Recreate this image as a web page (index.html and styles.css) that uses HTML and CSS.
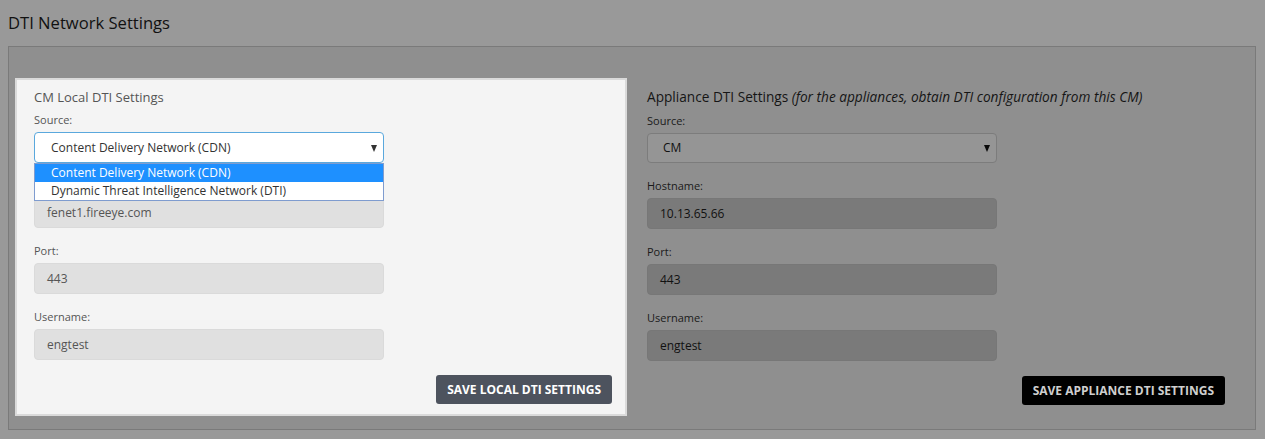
FILE: index.html
```html
<!DOCTYPE html>
<html>
<head>
<meta charset="utf-8">
<title>DTI Network Settings</title>
<link rel="stylesheet" href="styles.css">
</head>
<body>
<h1 class="page-title">DTI Network Settings</h1>
<div class="panel">
  <div class="card card-local">
    <h2 class="section-title">CM Local DTI Settings</h2>
    <div class="field">
      <label class="field-label">Source:</label>
      <div class="select select-focus">
        <span class="select-value">Content Delivery Network (CDN)</span>
        <span class="caret"></span>
        <ul class="dropdown">
          <li class="option option-active">Content Delivery Network (CDN)</li>
          <li class="option">Dynamic Threat Intelligence Network (DTI)</li>
        </ul>
      </div>
    </div>
    <div class="field field-covered">
      <label class="field-label label-covered">Hostname:</label>
      <div class="input">fenet1.fireeye.com</div>
    </div>
    <div class="field">
      <label class="field-label">Port:</label>
      <div class="input">443</div>
    </div>
    <div class="field">
      <label class="field-label">Username:</label>
      <div class="input">engtest</div>
    </div>
    <div class="actions">
      <button class="btn btn-local">SAVE LOCAL DTI SETTINGS</button>
    </div>
  </div>
  <div class="card card-appliance">
    <h2 class="section-title">Appliance DTI Settings <em>(for the appliances, obtain DTI configuration from this CM)</em></h2>
    <div class="field">
      <label class="field-label">Source:</label>
      <div class="select select-dim">
        <span class="select-value">CM</span>
        <span class="caret"></span>
      </div>
    </div>
    <div class="field">
      <label class="field-label">Hostname:</label>
      <div class="input">10.13.65.66</div>
    </div>
    <div class="field">
      <label class="field-label">Port:</label>
      <div class="input">443</div>
    </div>
    <div class="field">
      <label class="field-label">Username:</label>
      <div class="input">engtest</div>
    </div>
    <div class="actions">
      <button class="btn btn-appliance">SAVE APPLIANCE DTI SETTINGS</button>
    </div>
  </div>
</div>
</body>
</html>
```
FILE: styles.css
```css
* { box-sizing: border-box; }
html, body { margin: 0; padding: 0; }
body {
  background: #999999;
  font-family: "Open Sans", "Liberation Sans", sans-serif;
  color: #111;
  height: 439px;
  overflow: hidden;
}
.page-title {
  margin: 0;
  padding: 10px 8px 0 8px;
  height: 46px;
  font-size: 16.6px;
  line-height: 25px;
  font-weight: 400;
  color: #111;
}
.panel {
  margin: 0 9px 0 8px;
  border: 1px solid #7a7a7a;
  background: #8f8f8f;
  padding: 31px 6px 13px 6px;
  display: flex;
  gap: 20px;
}
.card { display: flex; flex-direction: column; }
.card-local {
  width: 612px;
  background: #f4f4f4;
  border: 2px solid #dadada;
  padding: 7px 13px 10px 17px;
  position: relative;
  z-index: 2;
}
.card-appliance {
  width: 578px;
  padding-top: 9px;
}
.section-title {
  margin: 0 0 5px 0;
  font-size: 13px;
  line-height: 20px;
  font-weight: 400;
  color: #555;
}
.card-appliance .section-title {
  color: #151515;
  margin-bottom: 6px;
  font-size: 13.65px;
}
.section-title em { font-style: italic; }
.field { margin-bottom: 15px; }
.field-label {
  display: block;
  font-size: 11px;
  line-height: 16px;
  margin-bottom: 4px;
  color: #555;
}
.label-covered { visibility: hidden; }
.card-appliance .field-label { color: #1a1a1a; }
.select, .input {
  width: 350px;
  height: 31px;
  border-radius: 4px;
  font-size: 12px;
  line-height: 29px;
  position: relative;
}
.select {
  border: 1px solid #5aa8dd;
  background: #fff;
  color: #333;
  padding-left: 16px;
}
.select-dim {
  border-color: #7c7c7c;
  background: #959595;
  color: #111;
  padding-left: 15px;
  height: 30px;
  line-height: 28px;
}
.caret {
  position: absolute;
  right: 6px;
  top: 12px;
  width: 0;
  height: 0;
  border-left: 3.5px solid transparent;
  border-right: 3.5px solid transparent;
  border-top: 7px solid #333;
}
.select-dim .caret { border-top-color: #0a0a0a; top: 11px; }
.dropdown {
  position: absolute;
  left: -1px;
  top: 30px;
  width: 350px;
  margin: 0;
  padding: 0;
  list-style: none;
  background: #fff;
  border: 1px solid #7f9ccf;
  z-index: 5;
}
.option {
  height: 18px;
  line-height: 18px;
  padding-left: 16px;
  font-size: 12px;
  color: #333;
}
.option-active { background: #1e90ff; color: #fff; }
.input {
  background: #e0e0e0;
  border: 1px solid #dadada;
  color: #555;
  padding-left: 12px;
}
.field-covered .input { height: 30px; line-height: 28px; }
.card-appliance .input {
  background: #7a7a7a;
  border-color: #777;
  color: #111;
}
.actions { display: flex; justify-content: flex-end; }
.btn {
  border: none;
  border-radius: 3px;
  height: 29px;
  padding: 0 11px;
  font-family: "Open Sans", "Liberation Sans", sans-serif;
  font-weight: 700;
  font-size: 12px;
  letter-spacing: 0;
  cursor: pointer;
}
.btn-local { background: #4d535e; color: #fff; }
.btn-appliance { background: #000; color: #cfcfcf; }
```
